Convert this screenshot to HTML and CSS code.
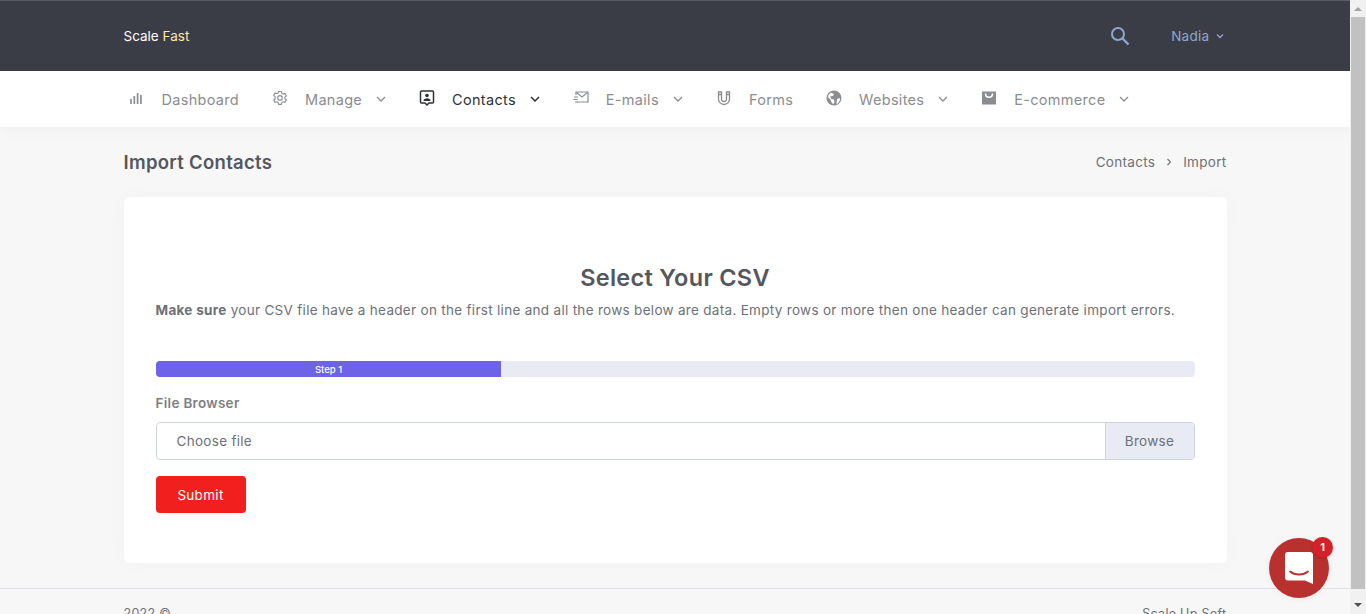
FILE: index.html
```html
<!DOCTYPE html>
<html lang="en">
<head>
<meta charset="UTF-8">
<title>Import Contacts</title>
<link rel="stylesheet" href="styles.css">
</head>
<body>
<div class="page">
  <div class="content">
    <!-- top bar -->
    <header class="topbar">
      <div class="container topbar-inner">
        <a class="brand">Scale <span class="brand-accent">Fast</span></a>
        <div class="topbar-right">
          <svg class="search-icon" viewBox="0 0 20 20" width="20" height="20"><circle cx="8" cy="8" r="6" fill="none" stroke="#8fa6cf" stroke-width="2"/><path d="M12.5 12.5L18.5 18.5" stroke="#8fa6cf" stroke-width="2.4" fill="none"/></svg>
          <span class="user">Nadia</span>
          <svg class="user-chevron" viewBox="0 0 8 6" width="8" height="6"><path d="M1 1.5L4 4.5L7 1.5" fill="none" stroke="#8fa6cf" stroke-width="1.3"/></svg>
        </div>
      </div>
    </header>

    <!-- main menu -->
    <nav class="menu">
      <div class="container menu-inner">
        <a class="menu-item item-dashboard">
          <svg class="menu-icon" viewBox="0 0 16 16"><path d="M2 9v5M5.3 6v8M8.6 3v11M11.9 5v9" stroke="currentColor" stroke-width="1.7" fill="none"/></svg>
          <span class="menu-label">Dashboard</span>
        </a>
        <a class="menu-item item-manage">
          <svg class="menu-icon" viewBox="0 0 16 16"><path d="M6.6 1.5h2.8l.4 1.9 1.3.7 1.8-.6 1.4 2.4-1.4 1.3v1.5l1.4 1.3-1.4 2.4-1.8-.6-1.3.7-.4 1.9H6.6l-.4-1.9-1.3-.7-1.8.6-1.4-2.4 1.4-1.3V6.7L1.7 5.4l1.4-2.4 1.8.6 1.3-.7z" fill="none" stroke="currentColor" stroke-width="1.1"/><circle cx="8" cy="7.9" r="2.3" fill="none" stroke="currentColor" stroke-width="1.1"/></svg>
          <span class="menu-label">Manage</span>
          <svg class="chevron" viewBox="0 0 10 6"><path d="M1 1l4 4 4-4" fill="none" stroke="currentColor" stroke-width="1.3"/></svg>
        </a>
        <a class="menu-item item-contacts active">
          <svg class="menu-icon" viewBox="0 0 16 16"><path d="M2.5 1h11a1 1 0 0 1 1 1v10a1 1 0 0 1-1 1H10l-2 2-2-2H2.500a1 1 0 0 1-1-1V2a1 1 0 0 1 1-1z" fill="none" stroke="currentColor" stroke-width="1.500"/><circle cx="8" cy="5.500" r="1.800" fill="currentColor"/><path d="M4.500 11c0-2 1.500-2.800 3.500-2.800s3.500.8 3.500 2.800z" fill="currentColor"/></svg>
          <span class="menu-label">Contacts</span>
          <svg class="chevron" viewBox="0 0 10 6"><path d="M1 1l4 4 4-4" fill="none" stroke="currentColor" stroke-width="1.500"/></svg>
        </a>
        <a class="menu-item item-emails">
          <svg class="menu-icon" viewBox="0 0 16 16"><path d="M3 5V2h12v10H4" fill="none" stroke="currentColor" stroke-width="1.200"/><path d="M3.500 2.500L9 7l5.500-4.500" fill="none" stroke="currentColor" stroke-width="1.200"/><path d="M1 7h4M0.500 9.500h4M2 12h3" stroke="currentColor" stroke-width="1.200"/></svg>
          <span class="menu-label">E-mails</span>
          <svg class="chevron" viewBox="0 0 10 6"><path d="M1 1l4 4 4-4" fill="none" stroke="currentColor" stroke-width="1.300"/></svg>
        </a>
        <a class="menu-item item-forms">
          <svg class="menu-icon" viewBox="0 0 16 16"><path d="M2.500 2v7a5.500 5.500 0 0 0 11 0V2h-3v7a2.500 2.500 0 0 1-5 0V2z" fill="none" stroke="currentColor" stroke-width="1.300"/><path d="M2.500 4.500h3M10.500 4.500h3" stroke="currentColor" stroke-width="1.300"/></svg>
          <span class="menu-label">Forms</span>
        </a>
        <a class="menu-item item-websites">
          <svg class="menu-icon" viewBox="0 0 16 16"><circle cx="8" cy="8" r="7.500" fill="currentColor"/><path d="M5 2.500l3 1.500-1 2-3 .5 1.500 2.500 2.500.5.500 3-1.500 1.800-2-2.800-.500-2L2 7.500 2.500 5zM11 9l2.800-1 .2 2-2 3.500-1.500.500z" fill="#fff"/></svg>
          <span class="menu-label">Websites</span>
          <svg class="chevron" viewBox="0 0 10 6"><path d="M1 1l4 4 4-4" fill="none" stroke="currentColor" stroke-width="1.300"/></svg>
        </a>
        <a class="menu-item item-ecommerce">
          <svg class="menu-icon" viewBox="0 0 16 16"><path d="M1 1.500h14v13H1z" fill="currentColor"/><path d="M4.500 3.500c0 5 7 5 7 0" fill="none" stroke="#fff" stroke-width="1.500"/></svg>
          <span class="menu-label">E-commerce</span>
          <svg class="chevron" viewBox="0 0 10 6"><path d="M1 1l4 4 4-4" fill="none" stroke="currentColor" stroke-width="1.300"/></svg>
        </a>
      </div>
    </nav>

    <main class="container">
      <div class="page-head">
        <h1 class="page-title">Import Contacts</h1>
        <div class="breadcrumb">
          <span>Contacts</span>
          <svg class="crumb-sep" viewBox="0 0 6 8" width="6" height="8"><path d="M1.500 1l3 3-3 3" fill="none" stroke="#6e7178" stroke-width="1.100"/></svg>
          <span>Import</span>
        </div>
      </div>

      <section class="card">
        <h2 class="card-title">Select Your CSV</h2>
        <p class="card-text"><strong>Make sure</strong> your CSV file have a header on the first line and all the rows below are data. Empty rows or more then one header can generate import errors.</p>

        <div class="progress">
          <div class="progress-bar" style="width: 33.3%">Step 1</div>
        </div>

        <label class="field-label">File Browser</label>
        <div class="file-input">
          <span class="file-name">Choose file</span>
          <span class="file-button">Browse</span>
        </div>

        <button class="submit">Submit</button>
      </section>
    </main>

    <footer class="footer">
      <div class="container footer-inner">
        <span>2022 ©</span>
        <span>Scale Up Soft</span>
      </div>
    </footer>
  </div>

  <!-- browser scrollbar -->
  <div class="scrollbar">
    <span class="arrow-up"></span>
    <span class="thumb"></span>
    <span class="arrow-down"></span>
  </div>
</div>

<!-- chat launcher -->
<div class="chat">
  <svg viewBox="0 0 28 32" width="28" height="32"><path d="M3 0h22a3 3 0 0 1 3 3v29l-8-3.500H3a3 3 0 0 1-3-3V3a3 3 0 0 1 3-3z" fill="#fff"/><path d="M5 19.500c5 4 13 4 18 0" fill="none" stroke="#b9312e" stroke-width="1.800" stroke-linecap="round"/></svg>
  <span class="chat-badge">1</span>
</div>
</body>
</html>
```

FILE: styles.css
```css
* {
box-sizing: border-box;
}
html, body {
height: 100%;
}
body {
margin: 0;
overflow: hidden;
font-family: "Inter", "Noto Sans", sans-serif;
font-size: 14px;
letter-spacing: 0.3px;
color: #6e7178;
background-color: #f7f7f7;
}
.page {
display: flex;
height: 614px;
}
.content {
flex: 1;
min-width: 0;
overflow: hidden;
}
.container {
width: 1103px;
margin: 0 auto;
}
.topbar {
height: 71px;
background-color: #3a3d46;
border-top: 1px solid #5a5c63;
}
.topbar-inner {
display: flex;
align-items: center;
justify-content: space-between;
height: 70px;
}
.brand {
color: #fff;
font-size: 13.5px;
letter-spacing: 0;
}
.brand-accent {
color: #fbe7a8;
}
.topbar-right {
display: flex;
align-items: center;
padding-right: 3px;
}
.search-icon {
margin-right: 41px;
}
.user {
color: #8fa6cf;
font-size: 13.500px;
margin-right: 6px;
}
.menu {
height: 56px;
background-color: #fff;
box-shadow: 0 2px 14px rgba(0,0,0,0.04);
}
.menu-inner {
display: flex;
align-items: center;
height: 56px;
padding-left: 5px;
}
.menu-item {
display: flex;
align-items: center;
color: #8b8d91;
font-size: 14.5px;
margin-right: 33px;
}
.menu-item.active {
color: #2f3238;
}
.menu-icon {
width: 16px;
height: 16px;
margin-right: 17px;
margin-top: -3px;
}
.chevron {
width: 10px;
height: 6px;
margin-left: 14px;
}
.page-head {
display: flex;
align-items: center;
justify-content: space-between;
height: 70px;
}
.page-title {
margin: 0;
font-size: 18.5px;
font-weight: 600;
color: #54575e;
}
.breadcrumb {
display: flex;
align-items: center;
gap: 11px;
font-size: 13.500px;
}
.card {
height: 366px;
padding: 66px 32px 0;
background-color: #fff;
border-radius: 6px;
box-shadow: 0 0 24px rgba(0,0,0,0.025);
}
.card-title {
margin: 0;
font-size: 23.500px;
font-weight: 600;
line-height: 30px;
text-align: center;
color: #54575e;
}
.card-text {
margin: 7px 0 0;
font-size: 13.500px;
line-height: 20px;
white-space: nowrap;
}
.progress {
height: 16px;
margin-top: 41px;
background-color: #e8ebf3;
border-radius: 4px;
overflow: hidden;
}
.progress-bar {
height: 16px;
background-color: #6c63e9;
color: #fff;
font-size: 9.500px;
line-height: 17px;
font-weight: 500;
text-align: center;
letter-spacing: 0;
}
.field-label {
display: block;
margin-top: 16px;
font-size: 13.500px;
font-weight: 600;
line-height: 20px;
color: #7c7f85;
}
.file-input {
display: flex;
height: 38px;
margin-top: 9px;
background-color: #fff;
border: 1px solid #ced3dc;
border-radius: 4px;
overflow: hidden;
}
.file-name {
flex: 1;
padding-left: 20px;
line-height: 36px;
font-size: 13.500px;
}
.file-button {
width: 89px;
background-color: #e8ebf3;
border-left: 1px solid #ced3dc;
text-align: center;
line-height: 36px;
font-size: 13.500px;
}
.submit {
display: block;
width: 90px;
height: 37px;
margin-top: 16px;
padding: 0;
background-color: #f21f1f;
border: none;
border-radius: 4px;
color: #fff;
font-family: inherit;
font-size: 13.500px;
letter-spacing: 0.3px;
}
.footer {
height: 60px;
margin-top: 25px;
border-top: 1px solid #e1e0e8;
}
.footer-inner {
display: flex;
justify-content: space-between;
padding-top: 17px;
font-size: 12.500px;
line-height: 16px;
}
.scrollbar {
display: flex;
flex-direction: column;
align-items: center;
width: 16px;
background-color: #f1f1f1;
}
.arrow-up {
width: 0;
height: 0;
margin: 7px 0 6px;
border-left: 4px solid transparent;
border-right: 4px solid transparent;
border-bottom: 4px solid #a3a3a3;
}
.thumb {
flex: 1;
width: 14px;
background-color: #c1c1c1;
}
.arrow-down {
width: 0;
height: 0;
margin: 14px 0 7px;
border-left: 4px solid transparent;
border-right: 4px solid transparent;
border-top: 4px solid #505050;
}
.chat {
position: fixed;
left: 1269px;
top: 538px;
display: flex;
align-items: center;
justify-content: center;
width: 60px;
height: 60px;
background-color: #b9312e;
border-radius: 50%;
box-shadow: 0 1px 6px rgba(0,0,0,0.06);
}
.chat-badge {
position: absolute;
left: 43px;
top: -1px;
width: 21px;
height: 21px;
background-color: #d42027;
border-radius: 50%;
color: #fff;
font-size: 11px;
font-weight: 700;
line-height: 21px;
text-align: center;
letter-spacing: 0;
box-shadow: 0 1px 3px rgba(0,0,0,0.2);
}
```
